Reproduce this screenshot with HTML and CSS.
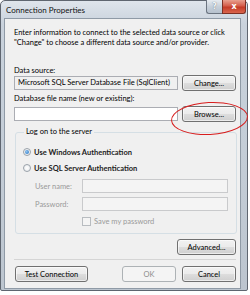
FILE: index.html
```html
<!DOCTYPE html>
<html lang="en">
<head>
    <meta charset="UTF-8">
    <title>Connection Properties</title>
    <link rel="stylesheet" href="styles.css">
</head>
<body>
    <div class="window">
        <div class="titlebar">
            <span class="title">Connection Properties</span>
            <div class="caption-buttons">
                <span class="cap help">?</span>
                <span class="cap close">x</span>
            </div>
        </div>

        <div class="client">
            <p class="intro">Enter information to connect to the selected data source or click "Change" to choose a different data source and/or provider.</p>

            <label class="label first">Data source:</label>
            <div class="row">
                <div class="textbox readonly">Microsoft SQL Server Database File (SqlClient)</div>
                <button class="button">Change...</button>
            </div>

            <label class="label second">Database file name (new or existing):</label>
            <div class="row browse-row">
                <div class="textbox"></div>
                <button class="button browse">Browse...</button>
            </div>

            <fieldset class="group">
                <legend>Log on to the server</legend>
                <div class="radio-row">
                    <span class="radio checked"></span>
                    <span>Use Windows Authentication</span>
                </div>
                <div class="radio-row">
                    <span class="radio"></span>
                    <span>Use SQL Server Authentication</span>
                </div>
                <div class="field-row">
                    <span class="field-label">User name:</span>
                    <div class="textbox disabled"></div>
                </div>
                <div class="field-row">
                    <span class="field-label">Password:</span>
                    <div class="textbox disabled"></div>
                </div>
                <div class="check-row">
                    <span class="checkbox"></span>
                    <span>Save my password</span>
                </div>
            </fieldset>

            <div class="advanced-row">
                <button class="button advanced">Advanced...</button>
            </div>

            <div class="footer">
                <button class="button test">Test Connection</button>
                <button class="button ok" disabled>OK</button>
                <button class="button">Cancel</button>
            </div>
        </div>
    </div>
</body>
</html>
```

FILE: styles.css
```css
* {
    margin: 0;
    padding: 0;
    box-sizing: border-box;
}

body {
    font-family: Lato, "Open Sans", sans-serif;
    font-size: 7.5px;
    color: #000000;
    background: #ffffff;
    width: 250px;
    height: 295px;
    overflow: hidden;
}

.window {
    width: 248px;
    height: 291px;
    border: 1px solid #5f6670;
    border-radius: 5px 5px 2px 2px;
    background: linear-gradient(180deg, #dfe5ec 0%, #c9d2dc 8%, #c3ccd6 60%, #bcc5cf 100%);
    padding: 0 6px 0 3px;
    position: relative;
}

.titlebar {
    height: 17px;
    display: flex;
    align-items: center;
    padding-left: 2px;
}

.title {
    font-size: 8px;
    color: #111111;
}

.caption-buttons {
    position: absolute;
    top: -1px;
    right: 1px;
    display: flex;
}

.cap {
    height: 14px;
    display: flex;
    align-items: center;
    justify-content: center;
    font-family: "DejaVu Sans", sans-serif;
    font-weight: bold;
    font-size: 8px;
    color: #ffffff;
    border: 1px solid #6b7480;
    border-top: none;
}

.help {
    width: 16px;
    background: linear-gradient(180deg, #e6ebf0 0%, #c7d0da 50%, #b6c1cd 100%);
    border-radius: 0 0 0 3px;
    border-right: none;
    color: #f4f6f8;
    text-shadow: 0 0 1px #55606c;
}

.close {
    width: 24px;
    background: linear-gradient(180deg, #e8a08f 0%, #d45d4a 45%, #c43b27 55%, #d9654d 100%);
    border-color: #7d3024;
    border-radius: 0 0 3px 0;
}

.client {
    height: 271px;
    background: #f0f0f0;
    border: 1px solid #8f9aa6;
    padding: 9px 4px 0 9px;
}

.intro {
    line-height: 10px;
}

.label {
    display: block;
    line-height: 10px;
}

.label.first {
    margin-top: 18px;
}

.label.second {
    margin-top: 3px;
}

.row {
    display: flex;
    align-items: center;
    gap: 4px;
    height: 16px;
    margin-top: -1px;
}

.row.browse-row {
    margin-top: 2px;
}

.textbox {
    flex: 1;
    height: 14px;
    border: 1px solid #abadb3;
    background: #ffffff;
    padding: 0 3px;
    line-height: 12px;
    white-space: nowrap;
    overflow: hidden;
}

.textbox.readonly {
    background: #f0f0f0;
}

.textbox.disabled {
    background: #f4f4f4;
    border-color: #c9cacc;
}

.button {
    width: 54px;
    height: 16px;
    font-family: inherit;
    font-size: 7.5px;
    color: #000000;
    border: 1px solid #707070;
    border-radius: 3px;
    background: linear-gradient(180deg, #f2f2f2 0%, #ebebeb 48%, #dddddd 52%, #cfcfcf 100%);
    box-shadow: inset 0 0 0 1px rgba(255, 255, 255, 0.6);
}

.browse {
    position: relative;
}

.browse::after {
    content: "";
    position: absolute;
    left: -12px;
    top: -5px;
    width: 75px;
    height: 31px;
    border: 1.3px solid #d81e1e;
    border-radius: 50%;
    transform: rotate(-3deg);
}

.group {
    border: 1px solid #d5dfe5;
    border-radius: 3px;
    margin: 5px -1px 0 1px;
    padding: 10px 8px 7px 7px;
}

.group legend {
    padding: 0 2px;
    margin-left: 1px;
    line-height: 10px;
}

.radio-row {
    display: flex;
    align-items: center;
    gap: 3px;
    height: 10px;
    margin-bottom: 6px;
    font-weight: 700;
    color: #222222;
}

.radio {
    width: 8px;
    height: 8px;
    border-radius: 50%;
    border: 1px solid #9aa2aa;
    background: radial-gradient(circle, #ffffff 0%, #e4e7ea 100%);
    display: flex;
    align-items: center;
    justify-content: center;
}

.radio.checked::after {
    content: "";
    width: 4px;
    height: 4px;
    border-radius: 50%;
    background: radial-gradient(circle at 40% 40%, #8fc3f0 0%, #1e6fc0 100%);
}

.field-row {
    display: flex;
    align-items: center;
    margin-top: 4px;
    padding-left: 12px;
}

.radio-row + .field-row {
    margin-top: 0;
}

.field-label {
    width: 47px;
    color: #9a9a9a;
}

.check-row {
    display: flex;
    align-items: center;
    gap: 3px;
    height: 10px;
    margin-top: 5px;
    padding-left: 59px;
    color: #9a9a9a;
}

.checkbox {
    width: 9px;
    height: 9px;
    border: 1px solid #b8bcc0;
    background: #f4f4f4;
}

.advanced-row {
    display: flex;
    justify-content: flex-end;
    padding: 5px 0 4px 0;
    border-bottom: 1px solid #d5d5d5;
}

.advanced-row .button {
    width: 59px;
}

.footer {
    display: flex;
    align-items: center;
    gap: 6px;
    padding: 6px 0 0 1px;
}

.footer .test {
    width: 73px;
    margin-right: auto;
}

.footer .ok {
    color: #8d8d8d;
    border-color: #adb2b5;
    background: #f4f4f4;
    box-shadow: none;
}
```
